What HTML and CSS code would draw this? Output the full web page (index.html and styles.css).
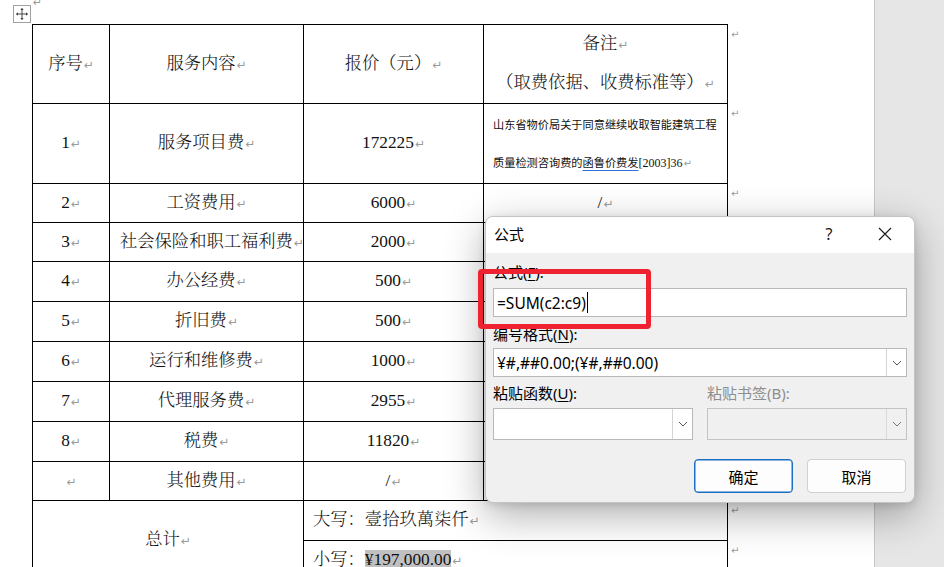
FILE: index.html
```html
<!DOCTYPE html>
<html lang="zh-CN">
<head>
<meta charset="utf-8">
<title>公式</title>
<link rel="stylesheet" href="styles.css">
</head>
<body>
<div class="screen">
  <div class="page">
    <div class="topline"><span class="pm">↵</span></div>
    <div class="docrow">
      <div class="tbl">
        <div class="c"><div class="t">序号<span class="pm">↵</span></div></div>
        <div class="c"><div class="t">服务内容<span class="pm">↵</span></div></div>
        <div class="c"><div class="t">报价（元）<span class="pm">↵</span></div></div>
        <div class="c two"><div class="t">备注<span class="pm">↵</span></div><div class="t">（取费依据、收费标准等）<span class="pm">↵</span></div></div>

        <div class="c"><div class="t">1<span class="pm">↵</span></div></div>
        <div class="c"><div class="t">服务项目费<span class="pm">↵</span></div></div>
        <div class="c"><div class="t">172225<span class="pm">↵</span></div></div>
        <div class="c remark"><div class="t">山东省物价局关于同意继续收取智能建筑工程</div><div class="t">质量检测咨询费的<span class="gram">函鲁价费发</span><span class="num">[2003]36</span><span class="pm">↵</span></div></div>

        <div class="c"><div class="t">2<span class="pm">↵</span></div></div>
        <div class="c"><div class="t">工资费用<span class="pm">↵</span></div></div>
        <div class="c"><div class="t">6000<span class="pm">↵</span></div></div>
        <div class="c"><div class="t">/<span class="pm">↵</span></div></div>

        <div class="c"><div class="t">3<span class="pm">↵</span></div></div>
        <div class="c"><div class="t">社会保险和职工福利费<span class="pm">↵</span></div></div>
        <div class="c"><div class="t">2000<span class="pm">↵</span></div></div>
        <div class="c"></div>

        <div class="c"><div class="t">4<span class="pm">↵</span></div></div>
        <div class="c"><div class="t">办公经费<span class="pm">↵</span></div></div>
        <div class="c"><div class="t">500<span class="pm">↵</span></div></div>
        <div class="c"></div>

        <div class="c"><div class="t">5<span class="pm">↵</span></div></div>
        <div class="c"><div class="t">折旧费<span class="pm">↵</span></div></div>
        <div class="c"><div class="t">500<span class="pm">↵</span></div></div>
        <div class="c"></div>

        <div class="c"><div class="t">6<span class="pm">↵</span></div></div>
        <div class="c"><div class="t">运行和维修费<span class="pm">↵</span></div></div>
        <div class="c"><div class="t">1000<span class="pm">↵</span></div></div>
        <div class="c"></div>

        <div class="c"><div class="t">7<span class="pm">↵</span></div></div>
        <div class="c"><div class="t">代理服务费<span class="pm">↵</span></div></div>
        <div class="c"><div class="t">2955<span class="pm">↵</span></div></div>
        <div class="c"></div>

        <div class="c"><div class="t">8<span class="pm">↵</span></div></div>
        <div class="c"><div class="t">税费<span class="pm">↵</span></div></div>
        <div class="c"><div class="t">11820<span class="pm">↵</span></div></div>
        <div class="c"></div>

        <div class="c"><div class="t"><span class="pm">↵</span></div></div>
        <div class="c"><div class="t">其他费用<span class="pm">↵</span></div></div>
        <div class="c"><div class="t">/<span class="pm">↵</span></div></div>
        <div class="c"></div>

        <div class="c total"><div class="t">总计<span class="pm">↵</span></div></div>
        <div class="c wide"><div class="t">大写：壹拾玖萬柒仟<span class="pm">↵</span></div></div>
        <div class="c wide"><div class="t">小写：<span class="hl">¥197,000.00</span><span class="pm">↵</span></div></div>
      </div>
      <div class="marks">
        <div class="m">↵</div><div class="m">↵</div><div class="m">↵</div><div class="m">↵</div>
        <div class="m">↵</div><div class="m">↵</div><div class="m">↵</div><div class="m">↵</div>
        <div class="m">↵</div><div class="m">↵</div><div class="m">↵</div><div class="m">↵</div>
      </div>
    </div>
    <div class="handle">
      <svg width="14" height="14" viewBox="0 0 14 14" fill="none" stroke="#444" stroke-width="1">
        <path d="M7 1.5V12.5M1.5 7H12.5"/>
        <path d="M7 1 L5.3 3 H8.7 Z M7 13 L5.3 11 H8.7 Z M1 7 L3 5.3 V8.7 Z M13 7 L11 5.3 V8.7 Z" fill="#444" stroke="none"/>
      </svg>
    </div>
  </div>
  <div class="gutter"></div>

  <div class="dialog">
    <div class="dlg-title">
      <span class="dlg-name">公式</span>
      <span class="dlg-help">?</span>
      <span class="dlg-close">
        <svg width="14" height="14" viewBox="0 0 14 14" fill="none" stroke="#1a1a1a" stroke-width="1.1">
          <path d="M1 1L13 13M13 1L1 13"/>
        </svg>
      </span>
    </div>
    <div class="dlg-body">
      <div class="lbl l1">公式(<u>F</u>):</div>
      <div class="field"><span class="val">=SUM(c2:c9)</span><span class="caret"></span></div>
      <div class="lbl l2">编号格式(<u>N</u>):</div>
      <div class="combo full"><span class="val">¥#,##0.00;(¥#,##0.00)</span><span class="drop"><svg width="10" height="6" viewBox="0 0 10 6" fill="none" stroke="#555" stroke-width="1"><path d="M1 1L5 5L9 1"/></svg></span></div>
      <div class="pair">
        <div class="col">
          <div class="lbl">粘贴函数(<u>U</u>):</div>
          <div class="combo tall"><span class="val"></span><span class="drop"><svg width="10" height="6" viewBox="0 0 10 6" fill="none" stroke="#555" stroke-width="1"><path d="M1 1L5 5L9 1"/></svg></span></div>
        </div>
        <div class="col dis">
          <div class="lbl">粘贴书签(B):</div>
          <div class="combo tall"><span class="val"></span><span class="drop"><svg width="10" height="6" viewBox="0 0 10 6" fill="none" stroke="#777" stroke-width="1"><path d="M1 1L5 5L9 1"/></svg></span></div>
        </div>
      </div>
      <div class="btns">
        <button class="btn primary">确定</button>
        <button class="btn">取消</button>
      </div>
    </div>
  </div>

  <div class="redbox"></div>
</div>
</body>
</html>
```

FILE: styles.css
```css
* { box-sizing: border-box; margin: 0; padding: 0; }
body { margin: 0; background: #fff; }

.screen {
  position: relative;
  width: 944px;
  height: 567px;
  overflow: hidden;
  display: flex;
  background: #fff;
}

.page {
  width: 874px;
  flex: none;
  padding-left: 32px;
  background: #fff;
  font-family: "Liberation Serif", "Noto Serif CJK SC", "Noto Sans CJK SC", serif;
  color: #111;
}

.gutter {
  flex: 1;
  background: #e6e6e6;
  border-left: 1px solid #c8c8c8;
}

.pm {
  font-family: "DejaVu Sans", sans-serif;
  font-size: 12px;
  font-weight: 400;
  color: #9a9a9a;
  margin-left: 1px;
}

.topline { height: 24px; display: flow-root; }
.topline .pm {
  display: block;
  margin-left: 1px;
  font-size: 11px;
  line-height: 6px;
}

.docrow { display: flex; }

.tbl {
  display: grid;
  grid-template-columns: 77px 194px 180px 244px;
  grid-template-rows: 79px 80px 39px 39px 40px 40px 40px 40px 40px 39px 40px 40px;
  border-left: 1px solid #000;
  border-top: 1px solid #000;
  font-size: 17.3px;
  font-weight: 300;
}

.c {
  border-right: 1px solid #000;
  border-bottom: 1px solid #000;
  display: flex;
  flex-direction: column;
  justify-content: center;
  text-align: center;
  white-space: nowrap;
  overflow: hidden;
  padding: 0 10px;
  line-height: 22px;
}

.c.two { line-height: 38px; }

.c.remark {
  text-align: left;
  padding: 0 0 0 9px;
  font-size: 11.2px;
  line-height: 38px;
  font-family: "Noto Sans CJK SC", sans-serif;
  font-weight: 400;
}
.remark .pm { font-size: 10px; }
.remark .num { font-family: "Liberation Serif", serif; font-size: 12px; }
.remark .gram {
  text-decoration-line: underline;
  text-decoration-style: solid;
  text-decoration-color: #2f6fe0;
  text-decoration-thickness: 1px;
  text-underline-offset: 3px;
}

.c.total { grid-column: 1 / 3; grid-row: 11 / 13; }
.c.wide { grid-column: 3 / 5; text-align: left; padding-left: 9px; }

.hl { background: #c0c0c0; }

.marks {
  display: grid;
  grid-template-rows: 79px 80px 39px 39px 40px 40px 40px 40px 40px 39px 40px 40px;
  padding-top: 1px;
}
.m {
  padding: 4px 0 0 3px;
  font-family: "DejaVu Sans", sans-serif;
  font-size: 10px;
  line-height: 12px;
  color: #9a9a9a;
}

.handle {
  position: absolute;
  left: 13px;
  top: 5px;
  width: 18px;
  height: 18px;
  border: 1px solid #a0a0a0;
  background: #fff;
  display: flex;
  align-items: center;
  justify-content: center;
}

/* dialog */
.dialog {
  position: absolute;
  left: 485px;
  top: 216px;
  width: 430px;
  height: 287px;
  border: 1px solid #c4c4c4;
  border-radius: 8px;
  background: #f0f0f0;
  box-shadow: 0 12px 40px rgba(0, 0, 0, 0.32), 0 2px 8px rgba(0, 0, 0, 0.12);
  overflow: hidden;
  font-family: "Noto Sans", "Noto Sans CJK SC", sans-serif;
  color: #000;
}

.dlg-title {
  height: 36px;
  background: #fff;
  display: flex;
  align-items: center;
  padding-left: 8px;
  padding-bottom: 3px;
  font-size: 15px;
}
.dlg-name { flex: 1; font-family: "Noto Sans CJK SC", sans-serif; }
.dlg-help {
  width: 30px;
  text-align: center;
  margin-right: 18px;
  font-size: 16px;
  color: #1a1a1a;
}
.dlg-close {
  width: 46px;
  margin-right: 6px;
  display: flex;
  justify-content: center;
  align-items: center;
}

.dlg-body {
  padding: 9px 7px 9px 7px;
  display: flex;
  flex-direction: column;
}

.lbl {
  height: 20px;
  line-height: 20px;
  font-size: 15px;
  font-family: "Noto Sans", "Noto Sans CJK SC", sans-serif;
  white-space: nowrap;
}
.lbl u { text-underline-offset: 2px; }
.l2 { margin-top: 7px; }

.field {
  margin-top: 6px;
  height: 29px;
  background: #fff;
  border: 1px solid #b8b8b8;
  display: flex;
  align-items: center;
  padding-left: 3px;
  font-size: 15.5px;
}
.caret {
  width: 1px;
  height: 21px;
  background: #000;
  margin-left: 1px;
}

.combo {
  background: #fff;
  border: 1px solid #b8b8b8;
  display: flex;
  align-items: stretch;
  font-size: 15.5px;
}
.combo.full { margin-top: 4px; height: 29px; }
.combo.tall { margin-top: 5px; height: 32px; }
.combo .val {
  flex: 1;
  display: flex;
  align-items: center;
  padding-left: 3px;
  white-space: nowrap;
}
.combo .drop {
  width: 20px;
  border-left: 1px solid #d4d4d4;
  display: flex;
  align-items: center;
  justify-content: center;
  background: #fff;
}

.pair {
  margin-top: 6px;
  display: flex;
  gap: 14px;
}
.pair .col { width: 200px; display: flex; flex-direction: column; }
.dis .lbl { color: #8d8d8d; }
.dis .combo { background: #f0f0f0; border-color: #c4c4c4; }
.dis .combo .drop { background: #f0f0f0; border-left-color: #dadada; }

.btns {
  margin-top: 19px;
  display: flex;
  justify-content: flex-end;
  gap: 14px;
  padding-right: 1px;
}
.btn {
  width: 99px;
  height: 34px;
  border: 1px solid #d0d0d0;
  border-radius: 4px;
  background: #fdfdfd;
  font-family: "Noto Sans CJK SC", sans-serif;
  font-size: 15px;
  color: #000;
}
.btn.primary {
  border: 1px solid #1a6fc4;
  box-shadow: inset 0 0 0 0.5px #1a6fc4;
}

.redbox {
  position: absolute;
  left: 478px;
  top: 269px;
  width: 173px;
  height: 60px;
  border: 5px solid #ee2230;
  border-radius: 4px;
}
```
